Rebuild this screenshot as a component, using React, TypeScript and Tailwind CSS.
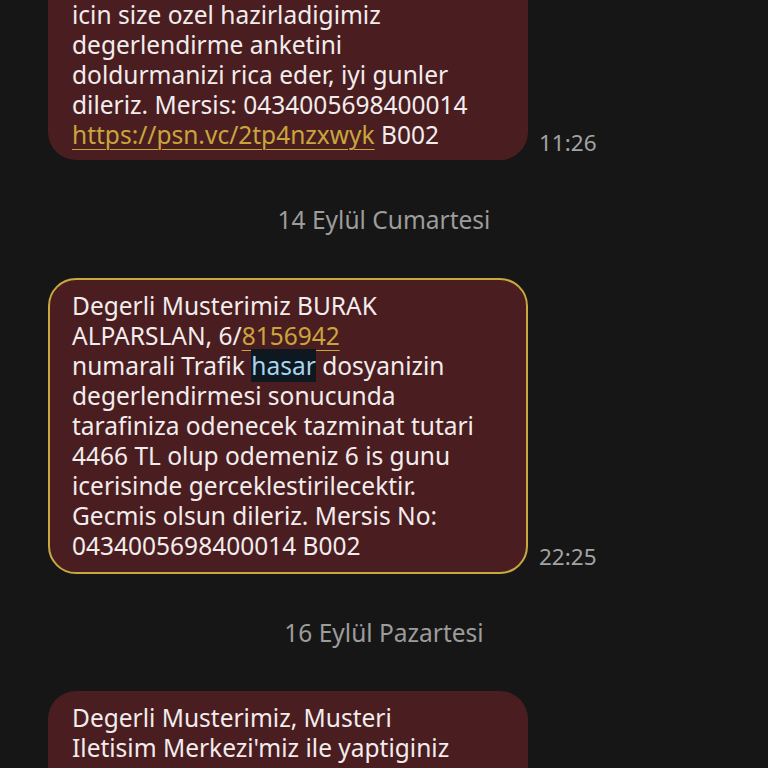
import type { ReactNode } from 'react';

const font = { fontFamily: '"Noto Sans", "Open Sans", sans-serif' };

function Bubble({ children, outlined, className = '' }: { children: ReactNode; outlined?: boolean; className?: string }) {
  return (
    <div
      className={`w-[480px] shrink-0 bg-[#4a1e21] text-[24.5px] leading-[30px] text-[#f3ecec] ${
        outlined ? 'border-2 border-[#c9a83f] rounded-[28px] py-[11px] px-[22px]' : 'px-[24px]'
      } ${className}`}
    >
      {children}
    </div>
  );
}

function Row({ children, time }: { children: ReactNode; time?: string }) {
  return (
    <div className="flex items-end pl-[48px]">
      {children}
      {time && <span className="ml-[11px] mb-[3px] text-[22.5px] leading-[28px] text-[#a3a3a3]">{time}</span>}
    </div>
  );
}

function DateLabel({ text }: { text: string }) {
  return <div className="text-center text-[24.5px] leading-[30px] text-[#9c9c9c]">{text}</div>;
}

function Link({ children }: { children: ReactNode }) {
  return <span className="text-[#c9a53d] underline decoration-1 underline-offset-[5px]">{children}</span>;
}

export default function App() {
  return (
    <div className="h-[768px] w-[768px] overflow-hidden bg-[#161616] flex flex-col" style={font}>
      <Row time="11:26">
        <Bubble className="rounded-b-[28px] pb-[10px]">
          icin size ozel hazirladigimiz
          <br />
          degerlendirme anketini
          <br />
          doldurmanizi rica eder, iyi gunler
          <br />
          dileriz. Mersis: 0434005698400014
          <br />
          <Link>https://psn.vc/2tp4nzxwyk</Link> B002
        </Bubble>
      </Row>

      <div className="mt-[45px] mb-[43px]">
        <DateLabel text="14 Eylül Cumartesi" />
      </div>

      <Row time="22:25">
        <Bubble outlined>
          Degerli Musterimiz BURAK
          <br />
          ALPARSLAN, 6/<Link>8156942</Link>
          <br />
          numarali Trafik <span className="bg-[#0e1820] text-[#a8d4ee]">hasar</span> dosyanizin
          <br />
          degerlendirmesi sonucunda
          <br />
          tarafiniza odenecek tazminat tutari
          <br />
          4466 TL olup odemeniz 6 is gunu
          <br />
          icerisinde gerceklestirilecektir.
          <br />
          Gecmis olsun dileriz. Mersis No:
          <br />
          0434005698400014 B002
        </Bubble>
      </Row>

      <div className="mt-[44px] mb-[43px]">
        <DateLabel text="16 Eylül Pazartesi" />
      </div>

      <Row>
        <Bubble className="rounded-t-[28px] pt-[12px] pb-[12px]">
          Degerli Musterimiz, Musteri
          <br />
          Iletisim Merkezi'miz ile yaptiginiz
          <br />
          gorusmeye dair degerlendirme
          <br />
          anketimizi doldurmanizi rica ederiz.
        </Bubble>
      </Row>
    </div>
  );
}
